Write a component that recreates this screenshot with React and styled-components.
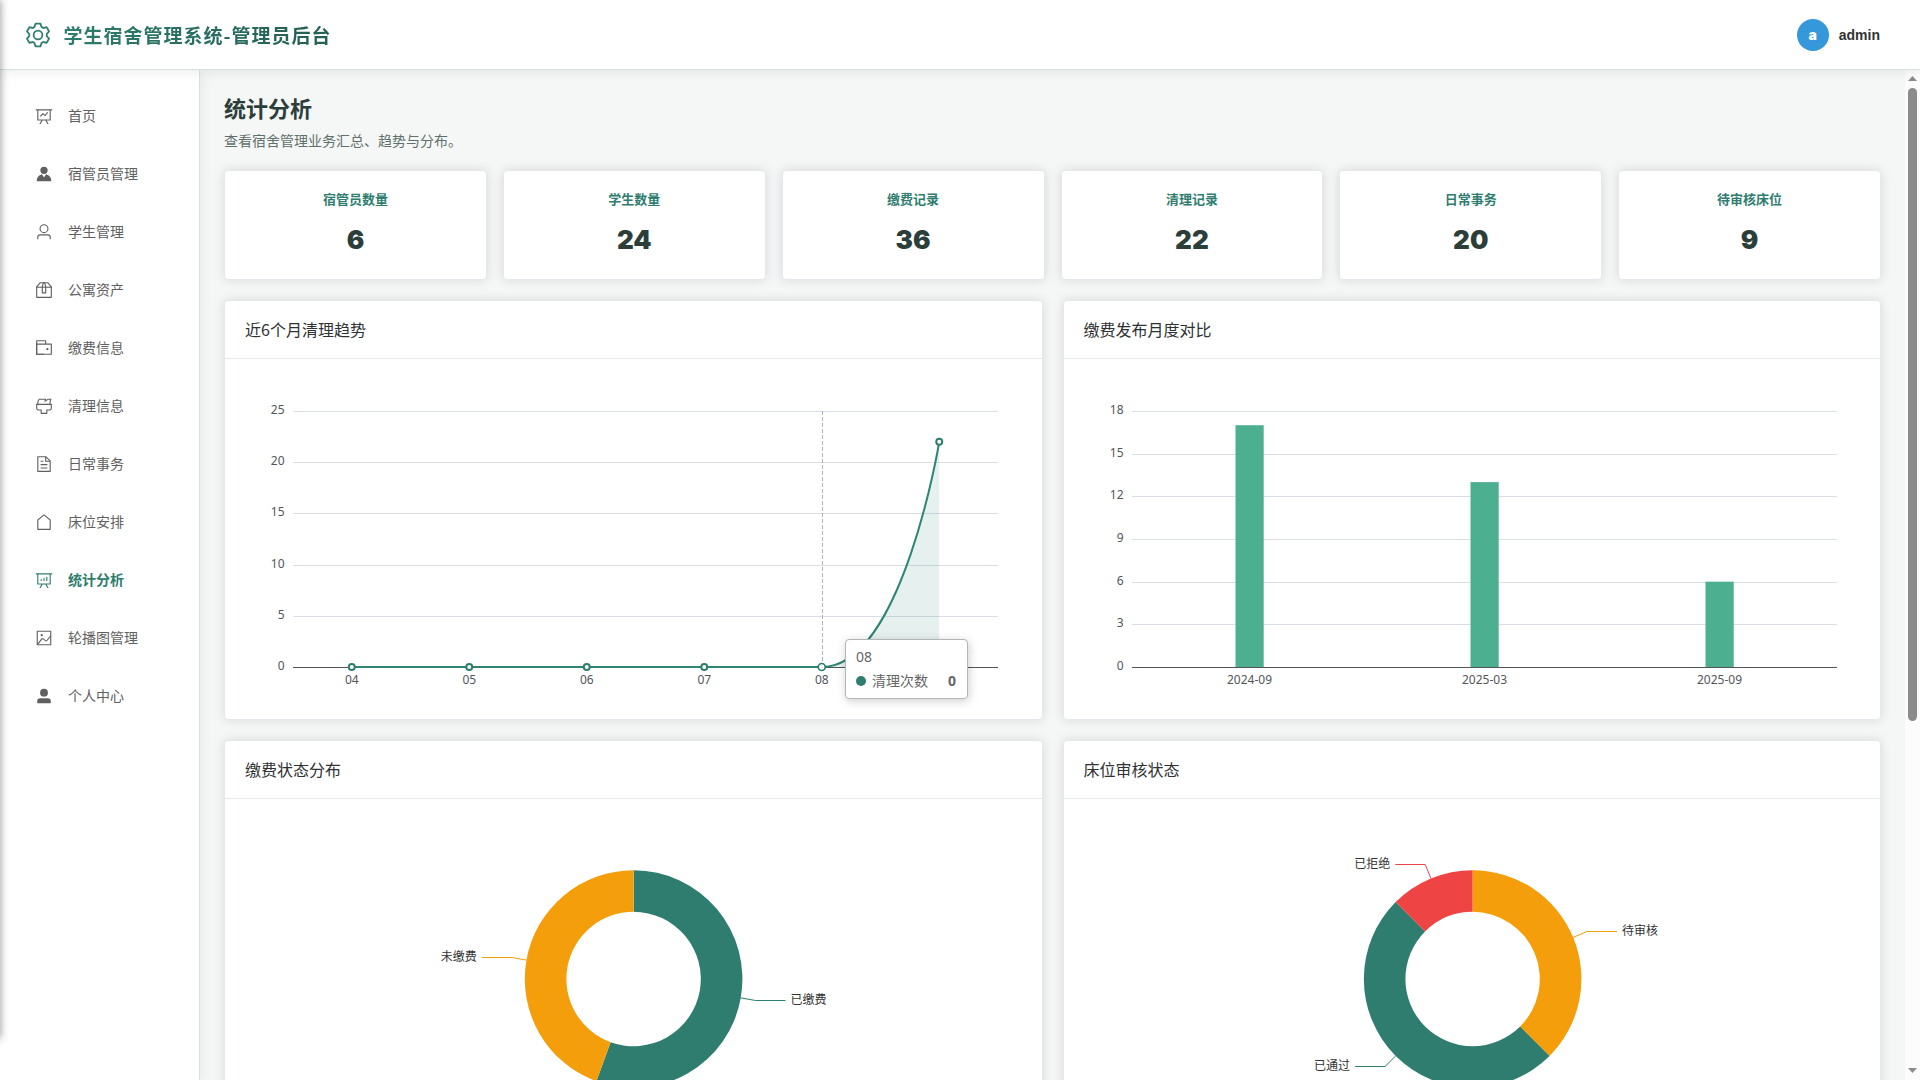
import React from "react";
import styled, { createGlobalStyle } from "styled-components";

const CJK = '"Noto Sans CJK SC", sans-serif';
const GREEN = "#2e7d6e";

const Global = createGlobalStyle`
  * { box-sizing: border-box; }
  html, body { margin: 0; padding: 0; overflow: hidden; }
  body { font-family: ${CJK}; color: #303133; background: #fff; }
  h1, h2, p { margin: 0; font-weight: inherit; }
`;

const Shell = styled.div`
  height: 1080px;
  display: flex;
  flex-direction: column;
  overflow: hidden;
`;

const EdgeShadow = styled.div`
  position: fixed;
  z-index: 10;
  left: -20px;
  top: 0;
  width: 20px;
  height: 1038px;
  box-shadow: 0 0 8px rgba(0, 0, 0, 0.45);
`;

const Header = styled.header`
  height: 70px;
  flex: none;
  padding: 0 40px 0 24px;
  display: flex;
  align-items: center;
  justify-content: space-between;
  background: #fff;
  border-bottom: 1px solid #d5e3df;
  box-shadow: 0 2px 12px rgba(0, 0, 0, 0.08);
  position: relative;
  z-index: 3;
`;

const Brand = styled.div`
  display: flex;
  align-items: center;
  gap: 11.5px;
  color: ${GREEN};
`;

const BrandName = styled.h1`
  font-size: 19px;
  line-height: 28px;
  font-weight: 700;
  letter-spacing: 1px;
  background: linear-gradient(90deg, #2e7d6e, #235f54);
  -webkit-background-clip: text;
  background-clip: text;
  color: transparent;
`;

const UserBox = styled.div`
  display: flex;
  align-items: center;
  gap: 10px;
  font: 700 14px/20px "Liberation Sans", sans-serif;
  color: #333;
`;

const Avatar = styled.span`
  width: 32px;
  height: 32px;
  padding-top: 1px;
  border-radius: 50%;
  display: flex;
  align-items: center;
  justify-content: center;
  background: #3498db;
  color: #fff;
  font: 900 14px/32px Inter, sans-serif;
`;

const Body = styled.div`
  flex: 1;
  display: flex;
  min-height: 0;
`;

const Sidebar = styled.nav`
  width: 200px;
  flex: none;
  padding: 21px 12px;
  display: flex;
  flex-direction: column;
  gap: 8px;
  background: #fff;
  border-right: 1px solid #d5e3df;
  box-shadow: 2px 0 12px rgba(0, 0, 0, 0.06);
  position: relative;
  z-index: 2;
`;

const NavItem = styled.div`
  height: 50px;
  padding: 0 20px;
  display: flex;
  align-items: center;
  gap: 12px;
  font-size: 14px;
  font-weight: ${(p) => (p.$active ? 700 : 400)};
  color: ${(p) => (p.$active ? GREEN : "#5f6060")};
`;

const NavLabel = styled.span`
  padding-bottom: 2px;
`;

const IconBox = styled.span`
  width: 24px;
  display: flex;
  justify-content: center;
`;

const Main = styled.main`
  flex: 1;
  min-width: 0;
  padding: 21px 24px 24px;
  overflow: hidden;
  background: #f4f7f6;
`;

const PageTitle = styled.h1`
  font-size: 22px;
  line-height: 32px;
  font-weight: 700;
  color: #2c3e3a;
`;

const PageNote = styled.p`
  margin-top: 6px;
  font-size: 14px;
  line-height: 22px;
  color: #5f706b;
`;

const StatRow = styled.section`
  margin-top: 19px;
  display: grid;
  grid-template-columns: repeat(6, 1fr);
  gap: 16px;
`;

const Card = styled.section`
  background: #fff;
  border: 1px solid #e4e7ed;
  border-radius: 4px;
  box-shadow: 0 0 12px rgba(0, 0, 0, 0.12);
`;

const StatCard = styled(Card)`
  height: 110px;
  padding-top: 18px;
  text-align: center;
`;

const StatLabel = styled.div`
  font-size: 13px;
  line-height: 20px;
  font-weight: 700;
  color: ${GREEN};
`;

const StatValue = styled.div`
  margin-top: 14px;
  font: 900 26px/34px Inter, sans-serif;
  color: #2c3e3a;
`;

const ChartGrid = styled.div`
  margin-top: 20px;
  display: grid;
  grid-template-columns: 1fr 1fr;
  gap: 20px;
`;

const ChartHead = styled.h2`
  height: 58px;
  padding: 0 20px 2px;
  display: flex;
  align-items: center;
  border-bottom: 1px solid #e4e7ed;
  font-size: 16px;
  color: #303133;
`;

const ChartBody = styled.div`
  padding: 20px;
  height: 360px;
  position: relative;
`;

const Plot = styled.svg`
  display: block;
  width: 100%;
  height: 320px;
  overflow: visible;
`;

const AxisText = styled.text`
  font: 12px "Noto Sans", sans-serif;
  fill: #54555a;
  text-anchor: ${(p) => p.$anchor};
`;

const PieText = styled.text`
  font: 12px ${CJK};
  fill: #333;
  text-anchor: ${(p) => p.$anchor};
`;

const Tooltip = styled.div`
  position: absolute;
  left: 620px;
  top: 280px;
  width: 123px;
  height: 60px;
  padding: 10px 11px 8px 10px;
  background: #fff;
  border: 1px solid #b3b6b8;
  border-radius: 4px;
  box-shadow: 1px 2px 10px rgba(0, 0, 0, 0.2);
  font: 14px/14px "Noto Sans", ${CJK};
  color: #666;
`;

const TipRow = styled.div`
  margin-top: 10px;
  display: flex;
  align-items: center;
  line-height: 14px;
`;

const Dot = styled.span`
  width: 10px;
  height: 10px;
  margin-right: 6px;
  border-radius: 50%;
  background: ${GREEN};
`;

const TipValue = styled.b`
  margin-left: auto;
`;

const ScrollTrack = styled.div`
  width: 15px;
  flex: none;
  background: #fcfcfc;
  display: flex;
  flex-direction: column;
  align-items: center;
`;

const Thumb = styled.div`
  width: 9px;
  height: 633px;
  margin-bottom: auto;
  border-radius: 5px;
  background: #8b8b8b;
`;

const Arrow = styled.svg`
  display: block;
  width: 9px;
  height: 5px;
  margin: ${(p) => (p.$down ? "0 0 7px" : "6px 0 7px")};
  fill: #8b8b8b;
`;

const ICONS = {
  setting: ["M600.704 64a32 32 0 0 1 30.464 22.208l35.2 109.376c14.784 7.232 28.928 15.36 42.432 24.512l112.384-24.192a32 32 0 0 1 34.432 15.36L944.32 364.8a32 32 0 0 1-4.032 37.504l-77.12 85.12a357.12 357.12 0 0 1 0 49.024l77.12 85.248a32 32 0 0 1 4.032 37.504l-88.704 153.6a32 32 0 0 1-34.432 15.296L708.8 803.904c-13.44 9.088-27.648 17.28-42.368 24.512l-35.264 109.376A32 32 0 0 1 600.704 960H423.296a32 32 0 0 1-30.464-22.208L357.696 828.48a351.616 351.616 0 0 1-42.56-24.64l-112.32 24.256a32 32 0 0 1-34.432-15.36L79.68 659.2a32 32 0 0 1 4.032-37.504l77.12-85.248a357.12 357.12 0 0 1 0-48.896l-77.12-85.248A32 32 0 0 1 79.68 364.8l88.704-153.6a32 32 0 0 1 34.432-15.296l112.32 24.256c13.568-9.152 27.776-17.408 42.56-24.64l35.2-109.312A32 32 0 0 1 423.232 64H600.64zm-23.424 64H446.72l-36.352 113.088-24.512 11.968a294.113 294.113 0 0 0-34.816 20.096l-22.656 15.36-116.224-25.088-65.28 113.152 79.68 88.192-1.92 27.136a293.12 293.12 0 0 0 0 40.192l1.92 27.136-79.808 88.192 65.344 113.152 116.224-25.024 22.656 15.296a294.113 294.113 0 0 0 34.816 20.096l24.512 11.968L446.72 896h130.688l36.48-113.152 24.448-11.904a288.282 288.282 0 0 0 34.752-20.096l22.592-15.296 116.288 25.024 65.28-113.152-79.744-88.192 1.92-27.136a293.12 293.12 0 0 0 0-40.256l-1.92-27.136 79.808-88.128-65.344-113.152-116.288 24.96-22.592-15.232a287.616 287.616 0 0 0-34.752-20.096l-24.448-11.904L577.344 128zM512 320a192 192 0 1 1 0 384 192 192 0 0 1 0-384m0 64a128 128 0 1 0 0 256 128 128 0 0 0 0-256"],
  dataLine: ["M359.168 768H160a32 32 0 0 1-32-32V192H64a32 32 0 0 1 0-64h896a32 32 0 1 1 0 64h-64v544a32 32 0 0 1-32 32H665.216l110.848 192h-73.856L591.36 768H433.024L322.176 960H248.32zM832 192H192v512h640zM342.656 534.656a32 32 0 1 1-45.312-45.312L444.992 341.76l125.44 94.08L679.04 300.032a32 32 0 1 1 49.92 39.936L581.632 524.224 451.008 426.24 342.656 534.592z"],
  avatar: ["M628.736 528.896A416 416 0 0 1 928 928H96a415.872 415.872 0 0 1 299.264-399.104L512 704zM720 304a208 208 0 1 1-416 0 208 208 0 0 1 416 0"],
  user: ["M512 512a192 192 0 1 0 0-384 192 192 0 0 0 0 384m0 64a256 256 0 1 1 0-512 256 256 0 0 1 0 512m320 320v-96a96 96 0 0 0-96-96H288a96 96 0 0 0-96 96v96a32 32 0 1 1-64 0v-96a160 160 0 0 1 160-160h448a160 160 0 0 1 160 160v96a32 32 0 1 1-64 0"],
  box: ["M317.056 128 128 344.064V896h768V344.064L706.944 128zm-14.528-64h418.944a32 32 0 0 1 24.064 10.88l206.528 236.096A32 32 0 0 1 960 332.032V928a32 32 0 0 1-32 32H96a32 32 0 0 1-32-32V332.032a32 32 0 0 1 7.936-21.12L278.4 75.008A32 32 0 0 1 302.528 64z", "M64 320h896v64H64z", "M448 327.872V640h128V327.872L526.08 128h-28.16zM448 64h128l64 256v352a32 32 0 0 1-32 32H416a32 32 0 0 1-32-32V320z"],
  wallet: ["M640 288h-64V128H128v704h384v32a32 32 0 0 0 32 32H96a32 32 0 0 1-32-32V96a32 32 0 0 1 32-32h512a32 32 0 0 1 32 32z", "M128 320v512h768V320zm-32-64h832a32 32 0 0 1 32 32v576a32 32 0 0 1-32 32H96a32 32 0 0 1-32-32V288a32 32 0 0 1 32-32", "M704 640a64 64 0 1 1 0-128 64 64 0 0 1 0 128"],
  brush: ["M896 448H128v192a64 64 0 0 0 64 64h192v192h256V704h192a64 64 0 0 0 64-64zm-770.752-64c0-47.552 5.248-90.24 15.552-128 14.72-54.016 42.496-107.392 83.2-160h417.28l-15.36 70.336L736 96h211.2c-24.832 42.88-41.92 96.256-51.2 160a663.872 663.872 0 0 0-6.144 128H960v256a128 128 0 0 1-128 128H704v160a32 32 0 0 1-32 32H352a32 32 0 0 1-32-32V768H192A128 128 0 0 1 64 640V384zm64 0h636.544c-2.048-45.824.256-91.584 6.848-137.216 4.48-30.848 10.688-59.776 18.688-86.784h-96.64l-221.12 141.248L561.92 160H256.512c-25.856 37.888-43.776 75.456-53.952 112.832-8.768 32.064-13.248 69.12-13.312 111.168z"],
  document: ["M832 384H576V128H192v768h640zm-26.496-64L640 154.496V320zM160 64h480l256 256v608a32 32 0 0 1-32 32H160a32 32 0 0 1-32-32V96a32 32 0 0 1 32-32m160 448h384v64H320zm0-192h160v64H320zm0 384h384v64H320z"],
  house: ["M192 413.952V896h640V413.952L512 147.328zM139.52 374.4l352-293.312a32 32 0 0 1 40.96 0l352 293.312A32 32 0 0 1 896 398.976V928a32 32 0 0 1-32 32H160a32 32 0 0 1-32-32V398.976a32 32 0 0 1 11.52-24.576"],
  dataAnalysis: ["m665.216 768 110.848 192h-73.856L591.36 768H433.024L322.176 960H248.32l110.848-192H160a32 32 0 0 1-32-32V192H64a32 32 0 0 1 0-64h896a32 32 0 1 1 0 64h-64v544a32 32 0 0 1-32 32zM832 192H192v512h640zM352 448a32 32 0 0 1 32 32v64a32 32 0 0 1-64 0v-64a32 32 0 0 1 32-32m160-64a32 32 0 0 1 32 32v128a32 32 0 0 1-64 0V416a32 32 0 0 1 32-32m160-64a32 32 0 0 1 32 32v192a32 32 0 1 1-64 0V352a32 32 0 0 1 32-32"],
  picture: ["M160 160v704h704V160zm-32-64h768a32 32 0 0 1 32 32v768a32 32 0 0 1-32 32H128a32 32 0 0 1-32-32V128a32 32 0 0 1 32-32", "M384 288q64 0 64 64t-64 64-64-64 64-64M185.408 876.992l-50.816-38.912L350.72 556.032a96 96 0 0 1 134.592-17.856l1.856 1.472 122.88 99.136a32 32 0 0 0 44.992-4.864l216-269.888 49.92 39.936-215.808 269.824-.256.32a96 96 0 0 1-135.04 14.464l-122.88-99.072-.64-.512a32 32 0 0 0-44.8 5.952z"],
  userFilled: ["M288 320a224 224 0 1 0 448 0 224 224 0 1 0-448 0m544 608H160a32 32 0 0 1-32-32v-96a160 160 0 0 1 160-160h448a160 160 0 0 1 160 160v96a32 32 0 0 1-32 32z"],
};

const Icon = ({ name, size = 18 }) => (
  <svg width={size} height={size} viewBox="0 0 1024 1024" fill="currentColor">
    {ICONS[name].map((d) => <path key={d} d={d} />)}
  </svg>
);

const NAV = [
  ["首页", "dataLine"],
  ["宿管员管理", "avatar"],
  ["学生管理", "user"],
  ["公寓资产", "box"],
  ["缴费信息", "wallet"],
  ["清理信息", "brush"],
  ["日常事务", "document"],
  ["床位安排", "house"],
  ["统计分析", "dataAnalysis"],
  ["轮播图管理", "picture"],
  ["个人中心", "userFilled"],
];

const STATS = [
  ["宿管员数量", 6],
  ["学生数量", 24],
  ["缴费记录", 36],
  ["清理记录", 22],
  ["日常事务", 20],
  ["待审核床位", 9],
];

const LEFT = 48;
const TOP = 32;
const W = 705;
const H = 256;
const BASE = TOP + H;

const Axes = ({ max, step, labels }) => {
  const ticks = [];
  for (let v = 0; v <= max; v += step) ticks.push(v);
  const band = W / labels.length;
  return (
    <g>
      {ticks.map((v) => {
        const y = Math.round(BASE - (v / max) * H);
        return (
          <g key={v}>
            <rect x={LEFT} y={y} width={W} height="1" fill={v ? "#dbdee7" : "#54555a"} />
            <AxisText x={LEFT - 8.5} y={y + 3} $anchor="end">{v}</AxisText>
          </g>
        );
      })}
      {labels.map((l, i) => (
        <AxisText key={l} x={LEFT + band * (i + 0.5)} y={BASE + 17} $anchor="middle">{l}</AxisText>
      ))}
    </g>
  );
};

const LineChart = () => {
  const data = [0, 0, 0, 0, 0, 22];
  const band = W / 6;
  const pts = data.map((v, i) => [LEFT + band * (i + 0.5), BASE - (v / 25) * H]);
  const [x4] = pts[4];
  const [x5, y5] = pts[5];
  const curve = `M${pts[0][0]} ${BASE}H${x4}C${x4 + 80.3} ${BASE} ${x5} ${y5} ${x5} ${y5}`;
  return (
    <Plot>
      <Axes max={25} step={5} labels={["04", "05", "06", "07", "08", "09"]} />
      <path d={`${curve}V${BASE}Z`} fill="#2e8573" fillOpacity="0.12" />
      <path d={curve} fill="none" stroke="#2e8573" strokeWidth="2" />
      <path d={`M${Math.round(x4) + 0.5} ${TOP}V${BASE}`} stroke="#b1b3b8" strokeDasharray="4 2" />
      {pts.map(([x, y], i) => (
        <circle key={i} cx={x} cy={y} r={i === 4 ? 3.5 : 3} fill="#fff" stroke={GREEN} strokeWidth={i === 4 ? 1.7 : 2} />
      ))}
    </Plot>
  );
};

const BarChart = () => {
  const data = [["2024-09", 17], ["2025-03", 13], ["2025-09", 6]];
  const band = W / 3;
  return (
    <Plot>
      <Axes max={18} step={3} labels={data.map((d) => d[0])} />
      {data.map(([l, v], i) => {
        const h = (v / 18) * H;
        return <rect key={l} x={LEFT + band * (i + 0.5) - 14} y={BASE - h} width="28.2" height={h} fill="#4caf90" />;
      })}
    </Plot>
  );
};

const polar = (r, deg) => {
  const a = (deg * Math.PI) / 180;
  return [388.6 + r * Math.sin(a), 160 - r * Math.cos(a)];
};

const Donut = ({ slices }) => {
  const total = slices.reduce((s, d) => s + d.value, 0);
  let start = 0;
  return (
    <Plot>
      {slices.map(({ name, value, color }) => {
        const end = start + (value / total) * 360;
        const mid = (start + end) / 2;
        const big = end - start > 180 ? 1 : 0;
        const R = 108.8;
        const r = 67.2;
        const d = `M${polar(R, start)}A${R} ${R} 0 ${big} 1 ${polar(R, end)}L${polar(r, end)}A${r} ${r} 0 ${big} 0 ${polar(r, start)}Z`;
        const dir = mid < 180 ? 1 : -1;
        const [ex, rawY] = polar(R + 15, mid);
        const ey = Math.floor(rawY) + 0.5;
        start = end;
        return (
          <g key={name}>
            <path d={d} fill={color} />
            <path d={`M${polar(R, mid)}L${ex} ${ey}H${ex + dir * 30}`} fill="none" stroke={color} />
            <PieText x={ex + dir * 35} y={ey + 3.5} $anchor={dir > 0 ? "start" : "end"}>{name}</PieText>
          </g>
        );
      })}
    </Plot>
  );
};

const ChartCard = ({ title, children }) => (
  <Card>
    <ChartHead>{title}</ChartHead>
    <ChartBody>{children}</ChartBody>
  </Card>
);

export default function App() {
  return (
    <Shell>
      <Global />
      <Header>
        <Brand>
          <Icon name="setting" size={28} />
          <BrandName>学生宿舍管理系统-管理员后台</BrandName>
        </Brand>
        <UserBox>
          <Avatar>a</Avatar>
          admin
        </UserBox>
      </Header>
      <Body>
        <Sidebar>
          {NAV.map(([label, icon]) => (
            <NavItem key={label} $active={label === "统计分析"}>
              <IconBox><Icon name={icon} /></IconBox>
              <NavLabel>{label}</NavLabel>
            </NavItem>
          ))}
        </Sidebar>
        <Main>
          <PageTitle>统计分析</PageTitle>
          <PageNote>查看宿舍管理业务汇总、趋势与分布。</PageNote>
          <StatRow>
            {STATS.map(([label, value]) => (
              <StatCard key={label}>
                <StatLabel>{label}</StatLabel>
                <StatValue>{value}</StatValue>
              </StatCard>
            ))}
          </StatRow>
          <ChartGrid>
            <ChartCard title="近6个月清理趋势">
              <LineChart />
              <Tooltip>
                08
                <TipRow>
                  <Dot />
                  清理次数
                  <TipValue>0</TipValue>
                </TipRow>
              </Tooltip>
            </ChartCard>
            <ChartCard title="缴费发布月度对比">
              <BarChart />
            </ChartCard>
            <ChartCard title="缴费状态分布">
              <Donut
                slices={[
                  { name: "已缴费", value: 20, color: GREEN },
                  { name: "未缴费", value: 16, color: "#f59e0b" },
                ]}
              />
            </ChartCard>
            <ChartCard title="床位审核状态">
              <Donut
                slices={[
                  { name: "待审核", value: 9, color: "#f59e0b" },
                  { name: "已通过", value: 12, color: GREEN },
                  { name: "已拒绝", value: 3, color: "#ef4444" },
                ]}
              />
            </ChartCard>
          </ChartGrid>
        </Main>
        <ScrollTrack>
          <Arrow viewBox="0 0 9 5"><path d="M4.5 0 9 5H0z" /></Arrow>
          <Thumb />
          <Arrow $down viewBox="0 0 9 5"><path d="M0 0h9L4.5 5z" /></Arrow>
        </ScrollTrack>
      </Body>
      <EdgeShadow />
    </Shell>
  );
}
